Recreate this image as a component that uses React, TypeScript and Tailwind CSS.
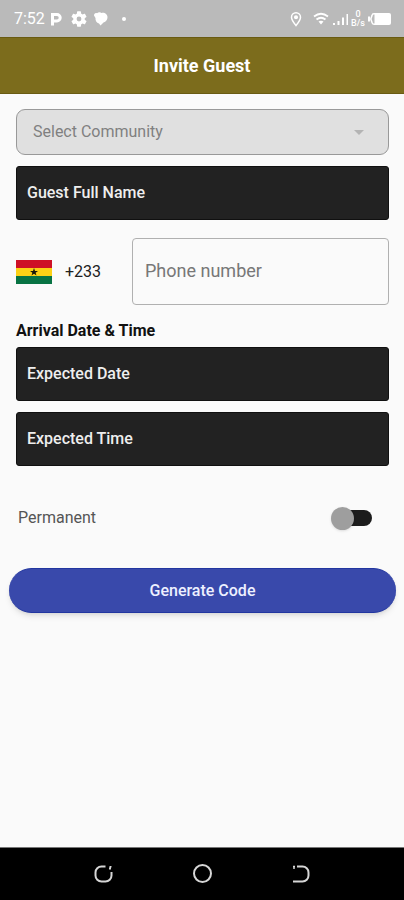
import type { ComponentProps } from "react";

function StatusBar() {
  return (
    <div className="flex h-[37px] items-center justify-between bg-[#bababa] pr-[13px] pl-[14px] text-white">
      <div className="flex items-center">
        <span className="text-[16px] leading-5">7:52</span>
        <svg className="ml-1 h-4 w-4" viewBox="0 0 16 16" fill="none" stroke="currentColor" strokeWidth="3" aria-hidden="true">
          <path d="M3.500 14.500V3.500H8a3.200 3.200 0 0 1 0 6.400H3.500" />
        </svg>
        <svg className="ml-[6px] h-4 w-4" viewBox="2 2 20 20" fill="currentColor" aria-hidden="true">
          <path d="M19.14 12.94a7 7 0 0 0 0-1.88l2.03-1.58a.5.5 0 0 0 .12-.61l-1.92-3.32a.5.5 0 0 0-.59-.22l-2.39.96a7 7 0 0 0-1.62-.94l-.36-2.54a.5.5 0 0 0-.48-.41h-3.84a.5.5 0 0 0-.47.41l-.36 2.54a7 7 0 0 0-1.62.94l-2.39-.96a.5.5 0 0 0-.59.22L2.74 8.87a.5.5 0 0 0 .12.61l2.03 1.58a7 7 0 0 0 0 1.88l-2.03 1.58a.5.5 0 0 0-.12.61l1.92 3.32c.12.22.37.29.59.22l2.39-.96c.5.38 1.03.7 1.62.94l.36 2.54c.05.24.24.41.48.41h3.84c.24 0 .44-.17.47-.41l.36-2.54a7 7 0 0 0 1.62-.94l2.39.96c.22.08.47 0 .59-.22l1.92-3.32a.5.5 0 0 0-.12-.61zM12 15a3 3 0 1 1 0-6 3 3 0 0 1 0 6z" />
        </svg>
        <svg className="ml-[6px] h-4 w-4" viewBox="0 0 16 16" fill="currentColor" aria-hidden="true">
          <path d="M1 4.500C1 2.500 2.500 1.500 4 2.200 5.500 1 7.500 1.200 8.500 2c3-.8 6 1.200 6 4.300 0 2.700-1.500 4.400-4 5.200L7.500 14.500 6 12.500C3.500 12 2.200 9.500 2.500 7z" />
        </svg>
        <span className="ml-[13px] h-1 w-1 rounded-full bg-white" />
      </div>
      <div className="flex items-center">
        <svg className="h-4 w-3" viewBox="0 0 12 16" fill="none" stroke="currentColor" strokeWidth="1.5" aria-hidden="true">
          <path d="M6 14.500C3.500 11.500 1.500 9 1.500 6.200a4.500 4.500 0 0 1 9 0C10.500 9 8.500 11.500 6 14.500z" />
          <circle cx="6" cy="6.200" r="1.300" fill="currentColor" />
        </svg>
        <svg className="ml-[11px] h-4 w-4" viewBox="0 0 16 16" fill="none" stroke="currentColor" strokeWidth="1.8" aria-hidden="true">
          <path d="M1 5.500Q8 0 15 5.500M3.500 8.500Q8 5 12.500 8.500" />
          <path d="M5.500 10.500Q8 8.800 10.500 10.500L8 13.500z" fill="currentColor" stroke="none" />
        </svg>
        <svg className="ml-1 h-4 w-4" viewBox="0 0 16 16" fill="currentColor" aria-hidden="true">
          <path d="M0 12h2v2H0zM4.500 10h2v4h-2zM9 6.500h2V14H9zM13.500 3h1.500v11h-1.500z" />
        </svg>
        <span className="ml-[2px] flex w-[14px] flex-col items-center text-[9px] leading-[9px] font-medium">
          <span>0</span>
          <span>B/s</span>
        </span>
        <svg className="ml-[3px] h-3 w-[23px]" viewBox="0 0 23 12" fill="currentColor" aria-hidden="true">
          <path d="M0 3.500h2v5H0z" />
          <path d="M6.500 0h14.500a2 2 0 0 1 2 2v8a2 2 0 0 1-2 2H6.500z" />
          <path d="M8 .8H6A2 2 0 0 0 4 2.500L2.800 6 4 9.500A2 2 0 0 0 6 11.200h2" fill="none" stroke="currentColor" strokeWidth="1.500" />
        </svg>
      </div>
    </div>
  );
}

function DarkField(props: ComponentProps<"input">) {
  return (
    <input
      type="text"
      className="block h-[54px] w-full rounded-[3px] border border-[#101010] bg-[#222222] px-[10px] pb-[2px] text-[16px] font-medium text-[#eeeeee] placeholder:text-[#eeeeee] placeholder:opacity-100"
      {...props}
    />
  );
}

function GhanaFlag() {
  return (
    <svg className="h-6 w-9" viewBox="0 0 36 24" role="img" aria-label="Ghana">
      <path fill="#ce1126" d="M0 0h36v8H0z" />
      <path fill="#fcd116" d="M0 8h36v8H0z" />
      <path fill="#087343" d="M0 16h36v8H0z" />
      <path fill="#17170a" d="M18 8l1 2.900h3l-2.400 1.800.9 2.900L18 13.800l-2.500 1.800.9-2.900L14 10.900h3z" />
    </svg>
  );
}

function NavigationBar() {
  const icon = "h-6 w-6 text-[#d6d6d6]";
  return (
    <nav className="flex h-[53px] items-center justify-center gap-[75px] border-t border-[#777777] bg-black">
      <button type="button" aria-label="Recent apps">
        <svg className={icon} viewBox="0 0 24 24" fill="none" stroke="currentColor" strokeWidth="2">
          <path d="M14.500 4.500H10.500A6 6 0 0 0 4.500 10.500V13.500A6 6 0 0 0 10.500 19.500H14.500A6 6 0 0 0 20.500 13.500V10" />
          <path d="M18 6.500h2M19.500 4v1.500" />
        </svg>
      </button>
      <button type="button" aria-label="Home">
        <svg className={icon} viewBox="0 0 24 24" fill="none" stroke="currentColor" strokeWidth="2">
          <circle cx="12.500" cy="11.500" r="8.500" />
        </svg>
      </button>
      <button type="button" aria-label="Back">
        <svg className={icon} viewBox="0 0 24 24" fill="none" stroke="currentColor" strokeWidth="2">
          <path d="M8 4.500h5.500a6 6 0 0 1 6 6v3a6 6 0 0 1-6 6H4" />
          <path d="M4 4.500h2M5 4v3" strokeWidth="1.500" />
        </svg>
      </button>
    </nav>
  );
}

export default function App() {
  return (
    <div className="flex min-h-screen flex-col bg-[#fafafa] font-[Roboto,sans-serif] text-[16px] text-[#202020]">
      <StatusBar />
      <header className="flex h-[57px] items-center justify-center border-y border-[#695b12] bg-[#7c6c1c]">
        <h1 className="text-[18px] leading-6 font-bold text-white">Invite Guest</h1>
      </header>
      <form className="flex-1 pt-[15px]" onSubmit={(event) => event.preventDefault()}>
        <div className="pr-[15px] pl-4">
          <div className="grid items-center">
            <select
              aria-label="Community"
              disabled
              className="col-start-1 row-start-1 h-[46px] w-full appearance-none rounded-[9px] border border-[#999999] bg-[#e0e0e0] px-4 text-[16px] text-[#808080] opacity-100"
            >
              <option>Select Community</option>
            </select>
            <svg className="pointer-events-none col-start-1 row-start-1 mr-[25px] h-[5px] w-[10px] justify-self-end" viewBox="0 0 10 5" aria-hidden="true">
              <path d="M0 0h10L5 5z" fill="#b4b4b4" />
            </svg>
          </div>
          <div className="mt-[11px]">
            <DarkField aria-label="Guest full name" placeholder="Guest Full Name" />
          </div>
          <div className="mt-[18px] flex items-center">
            <button type="button" aria-label="Country code +233" className="flex w-[116px] items-center gap-[13px]">
              <GhanaFlag />
              <span>+233</span>
            </button>
            <input
              type="tel"
              aria-label="Phone number"
              placeholder="Phone number"
              className="h-[67px] min-w-0 flex-1 rounded-[4px] border border-[#b0b0b0] bg-transparent px-3 pb-[2px] text-[18px] placeholder:text-[#777777] placeholder:opacity-100"
            />
          </div>
          <fieldset>
            <legend className="pt-4 pb-[6px] text-[16px] leading-5 font-bold text-[#111111]">Arrival Date &amp; Time</legend>
            <div className="flex flex-col gap-[11px]">
              <DarkField aria-label="Expected date" placeholder="Expected Date" />
              <DarkField aria-label="Expected time" placeholder="Expected Time" />
            </div>
          </fieldset>
          <label className="mt-10 flex h-6 items-center justify-between pr-[17px] pl-[2px] text-[#555555]">
            Permanent
            <input
              type="checkbox"
              role="switch"
              className="flex h-4 w-8 appearance-none items-center rounded-full bg-[#1c1c1c] before:-ml-[9px] before:h-[23px] before:w-[23px] before:shrink-0 before:rounded-full before:bg-[#9e9e9e] before:shadow-sm checked:before:ml-[18px]"
            />
          </label>
        </div>
        <div className="mt-[38px] pr-2 pl-[9px]">
          <button
            type="submit"
            className="h-[45px] w-full rounded-full border-y border-[#2236a0] bg-[#3949ab] text-[16px] font-medium text-[#edf0ff] shadow-md"
          >
            Generate Code
          </button>
        </div>
      </form>
      <NavigationBar />
    </div>
  );
}
